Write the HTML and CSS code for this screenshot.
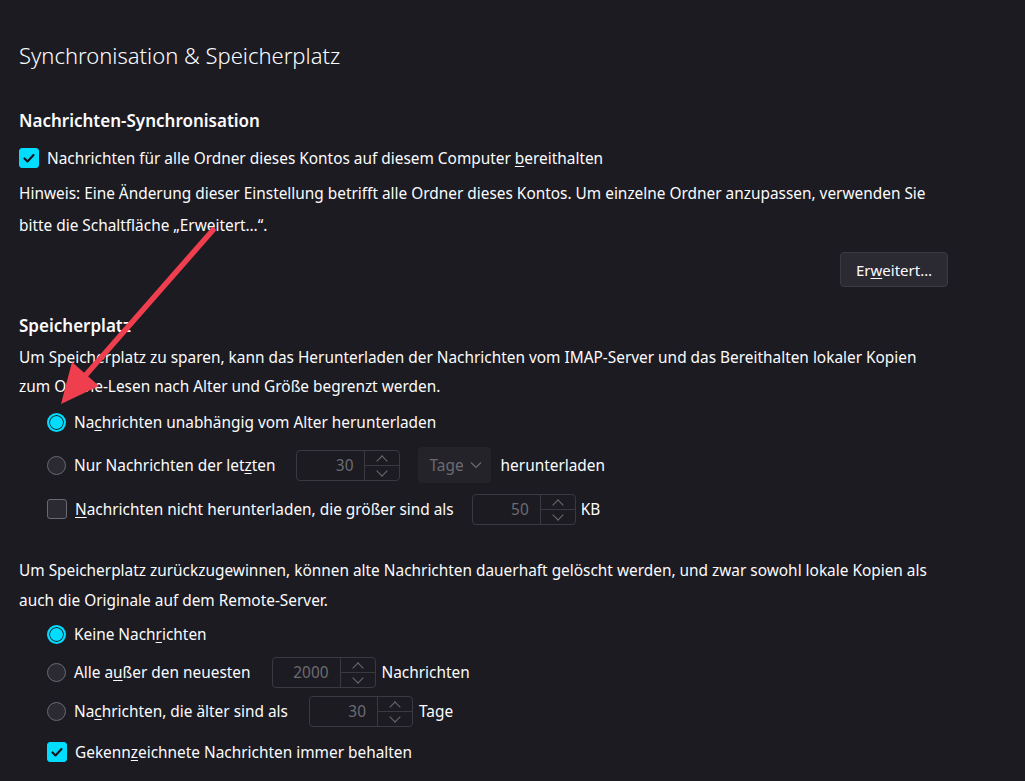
FILE: index.html
```html
<!DOCTYPE html>
<html lang="de">
<head>
  <meta charset="UTF-8" />
  <title>Synchronisation &amp; Speicherplatz</title>
  <link rel="stylesheet" href="styles.css">
</head>
<body>

  <div class="page">
    <h1 class="titel">Synchronisation &amp; Speicherplatz</h1>

    <!-- Synchronisation -->
    <h2 class="abschnitt sync">Nachrichten-Synchronisation</h2>
    <label class="zeile zeile-sync">
      <span class="check an"><svg viewBox="0 0 20 20"><path d="M5 10.5l3.3 3.3L15 6.8" /></svg></span>
      <span>Nachrichten für alle Ordner dieses Kontos auf diesem Computer <u>b</u>ereithalten</span>
    </label>
    <p class="hinweis">Hinweis: Eine Änderung dieser Einstellung betrifft alle Ordner dieses Kontos. Um einzelne Ordner anzupassen, verwenden Sie bitte die Schaltfläche „Erweitert…“.</p>
    <div class="knopf-zeile">
      <button class="knopf">Er<u>w</u>eitert…</button>
    </div>

    <!-- Speicherplatz -->
    <h2 class="abschnitt speicher">Speicherplatz</h2>
    <p class="text text-laden">Um Speicherplatz zu sparen, kann das Herunterladen der Nachrichten vom IMAP-Server und das Bereithalten lokaler Kopien zum Offline-Lesen nach Alter und Größe begrenzt werden.</p>

    <div class="optionen optionen-laden">
      <label class="zeile">
        <span class="radio an"></span>
        <span>Na<u>c</u>hrichten unabhängig vom Alter herunterladen</span>
      </label>
      <label class="zeile">
        <span class="radio"></span>
        <span class="beschriftung">Nur Nachrichten der let<u>z</u>ten</span>
        <span class="zahl">
          <span class="wert">30</span>
          <span class="pfeile"><span class="hoch"></span><span class="runter"></span></span>
        </span>
        <span class="auswahl">Tage <svg viewBox="0 0 12 8"><path d="M1 1.5l5 5 5-5" /></svg></span>
        <span>herunterladen</span>
      </label>
      <label class="zeile">
        <span class="check"></span>
        <span class="beschriftung kurz"><u>N</u>achrichten nicht herunterladen, die größer sind als</span>
        <span class="zahl">
          <span class="wert">50</span>
          <span class="pfeile"><span class="hoch"></span><span class="runter"></span></span>
        </span>
        <span class="einheit">KB</span>
      </label>
    </div>

    <p class="text text-loeschen">Um Speicherplatz zurückzugewinnen, können alte Nachrichten dauerhaft gelöscht werden, und zwar sowohl lokale Kopien als auch die Originale auf dem Remote-Server.</p>

    <div class="optionen optionen-loeschen">
      <label class="zeile">
        <span class="radio an"></span>
        <span>Keine Nach<u>r</u>ichten</span>
      </label>
      <label class="zeile">
        <span class="radio"></span>
        <span class="beschriftung">Alle a<u>u</u>ßer den neuesten</span>
        <span class="zahl">
          <span class="wert">2000</span>
          <span class="pfeile"><span class="hoch"></span><span class="runter"></span></span>
        </span>
        <span>Nachrichten</span>
      </label>
      <label class="zeile">
        <span class="radio"></span>
        <span class="beschriftung">Na<u>c</u>hrichten, die älter sind als</span>
        <span class="zahl">
          <span class="wert">30</span>
          <span class="pfeile"><span class="hoch"></span><span class="runter"></span></span>
        </span>
        <span>Tage</span>
      </label>
      <label class="zeile">
        <span class="check an"><svg viewBox="0 0 20 20"><path d="M5 10.5l3.3 3.3L15 6.8" /></svg></span>
        <span>Gekenn<u>z</u>eichnete Nachrichten immer behalten</span>
      </label>
    </div>
  </div>

  <!-- roter Hinweispfeil -->
  <svg class="pfeil" width="1025" height="781" viewBox="0 0 1025 781">
    <line x1="213" y1="230" x2="84" y2="377" />
    <polygon points="61,404 99,386 72,362" />
  </svg>

</body>
</html>
```

FILE: styles.css
```css
body {
  margin: 0;
  background: #1c1b22;
  color: #fbfbfe;
  font-family: "Segoe UI", "Noto Sans", sans-serif;
  font-size: 15.4px;
  position: relative;
  overflow: hidden;
  height: 781px;
}

.page {
  width: 929px;
  padding-left: 19px;
}

.titel {
  margin: 39px 0 0;
  font-size: 22px;
  font-weight: 300;
  line-height: 32px;
}

.abschnitt {
  margin: 0;
  font-size: 17px;
  font-weight: 600;
  line-height: 24px;
}

.sync { margin-top: 38px; }
.speicher { margin-top: 27px; }

u {
  text-decoration-thickness: 1px;
  text-underline-offset: 2px;
}

.zeile {
  display: flex;
  align-items: center;
  gap: 8px;
  height: 32px;
}

.zeile-sync { margin-top: 9px; }

.hinweis {
  margin: 4px 0 0;
  line-height: 32px;
}

.knopf-zeile {
  display: flex;
  justify-content: flex-end;
  margin-top: 10px;
}

.knopf {
  height: 35px;
  padding: 0 15px;
  background: #2b2a33;
  border: 1px solid #3b3a43;
  border-radius: 4px;
  color: #fbfbfe;
  font: inherit;
  font-size: 15px;
}

.text {
  margin: 0;
}

.text-laden {
  margin-top: 5px;
  line-height: 29px;
}

.text-loeschen {
  margin-top: 31px;
  line-height: 30px;
}

.optionen {
  margin-left: 28px;
  display: flex;
  flex-direction: column;
}

.optionen-laden { margin-top: 5px; }
.optionen-laden .zeile:nth-child(2) { margin-top: 8px; height: 38px; }
.optionen-laden .zeile:nth-child(3) { margin-top: 9px; }

.optionen-loeschen { margin-top: 2px; gap: 6px; }
.optionen-loeschen .zeile:nth-child(3) { margin-top: 1px; }
.optionen-loeschen .zeile:nth-child(4) { margin-top: 3px; }

/* Checkboxen und Radioknöpfe */
.check {
  width: 18px;
  height: 18px;
  flex: none;
  border: 1px solid #6a6970;
  border-radius: 3px;
  background: #2b2a33;
  display: flex;
}

.check.an {
  background: #00ddff;
  border-color: #00ddff;
}

.check svg {
  width: 18px;
  height: 18px;
  fill: none;
  stroke: #15141a;
  stroke-width: 2.4;
  stroke-linecap: round;
  stroke-linejoin: round;
}

.radio {
  width: 17px;
  height: 17px;
  flex: none;
  border: 1px solid #6a6970;
  border-radius: 50%;
  background: #2b2a33;
}

.radio.an {
  width: 15px;
  height: 15px;
  border: 2px solid #00ddff;
  background: #00ddff;
  box-shadow: inset 0 0 0 1px #1c1b22;
}

.beschriftung {
  margin-right: 13px;
}

.beschriftung.kurz {
  margin-right: 10px;
}

.einheit {
  margin-left: -1px;
}

/* Zahlenfelder */
.zahl {
  display: flex;
  width: 102px;
  height: 29px;
  border: 1px solid #3a3941;
  border-radius: 4px;
  background: #1c1b22;
  margin-right: -2px;
}

.wert {
  flex: 1;
  text-align: right;
  padding-right: 11px;
  line-height: 29px;
  color: #6c6b72;
}

.pfeile {
  width: 34px;
  display: flex;
  flex-direction: column;
  border-left: 1px solid #3a3941;
}

.hoch,
.runter {
  flex: 1;
  position: relative;
}

.hoch {
  border-bottom: 1px solid #3a3941;
}

.hoch::after,
.runter::after {
  content: "";
  position: absolute;
  left: 13px;
  width: 7px;
  height: 7px;
  border-left: 1px solid #6c6b72;
  border-top: 1px solid #6c6b72;
}

.hoch::after {
  top: 6px;
  transform: rotate(45deg);
}

.runter::after {
  top: 1px;
  transform: rotate(225deg);
}

.auswahl {
  display: flex;
  align-items: center;
  gap: 6px;
  height: 36px;
  padding: 0 9px 0 11px;
  margin: 0 2px 0 12px;
  border-radius: 4px;
  background: #24232a;
  color: #6c6b72;
}

.auswahl svg {
  width: 12px;
  height: 8px;
  fill: none;
  stroke: #6c6b72;
  stroke-width: 1.2;
}

.pfeil {
  position: absolute;
  left: 0;
  top: 0;
  pointer-events: none;
}

.pfeil line {
  stroke: #ef3f4e;
  stroke-width: 5.5;
  stroke-linecap: round;
}

.pfeil polygon {
  fill: #ef3f4e;
}
```
